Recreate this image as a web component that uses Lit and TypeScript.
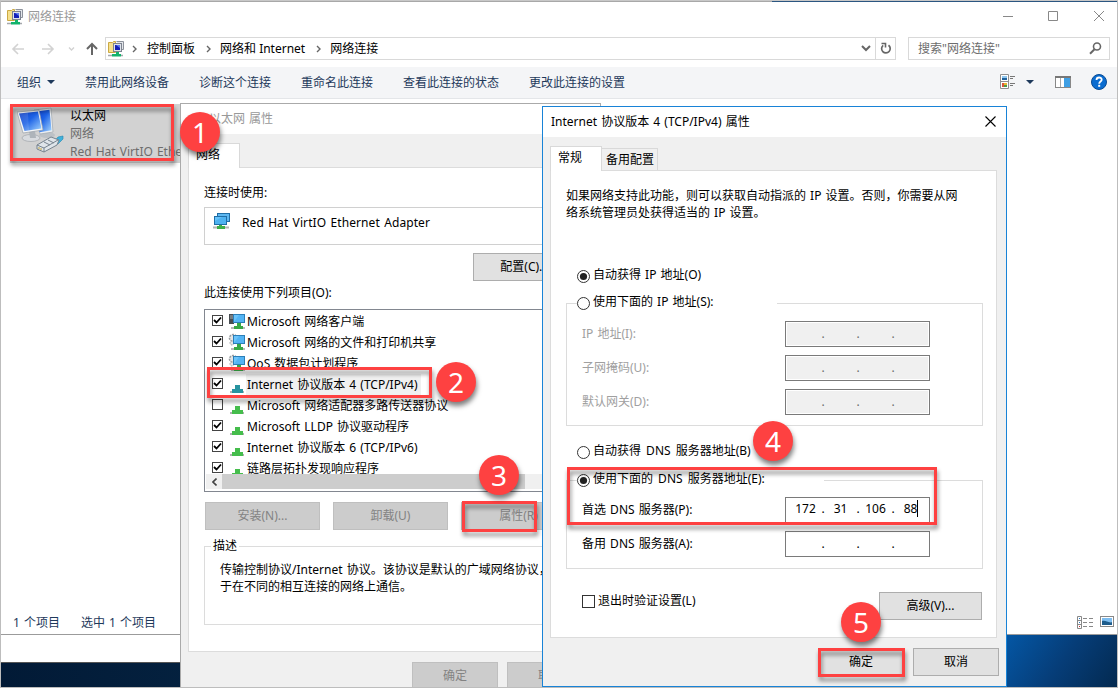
import { LitElement, html, css, svg } from 'lit';
import { customElement, property } from 'lit/decorators.js';

interface ProtocolItem {
  label: string;
  checked: boolean;
  icon: 'client' | 'service' | 'protocol';
  selected?: boolean;
}

const protocols: ProtocolItem[] = [
  { label: 'Microsoft 网络客户端', checked: true, icon: 'client' },
  { label: 'Microsoft 网络的文件和打印机共享', checked: true, icon: 'service' },
  { label: 'QoS 数据包计划程序', checked: true, icon: 'service' },
  { label: 'Internet 协议版本 4 (TCP/IPv4)', checked: true, icon: 'protocol', selected: true },
  { label: 'Microsoft 网络适配器多路传送器协议', checked: false, icon: 'protocol' },
  { label: 'Microsoft LLDP 协议驱动程序', checked: true, icon: 'protocol' },
  { label: 'Internet 协议版本 6 (TCP/IPv6)', checked: true, icon: 'protocol' },
  { label: '链路层拓扑发现响应程序', checked: true, icon: 'protocol' },
];

const ipLabels = ['IP 地址(I):', '子网掩码(U):', '默认网关(D):'];

const connectionsIcon = html`
  <svg width="16" height="16" viewBox="0 0 16 16">
    <path d="M0.500 1.500h4l1-1h2v11h-7z" fill="#f6e08c" stroke="#cba943"/>
    <path d="M8.500 0.500h7v8h-2" fill="#e3e6ea" stroke="#8d929c"/>
    <rect x="5.500" y="2.500" width="8" height="8" fill="#dfe3ea" stroke="#7d8390"/>
    <rect x="7" y="4" width="5" height="5" fill="#1420b8"/>
    <path d="M8 4h4v3z" fill="#5a78ee"/>
    <path d="M8 11h3v2h2v2.500H4V13h4z" fill="#12b36b"/>
    <path d="M0 14.500h4M13 14.500h2" stroke="#a5a8ad" stroke-width="1.600"/>
  </svg>
`;

const adapterIcon = html`
  <svg width="17" height="17" viewBox="0 0 17 17">
    <rect x="4.5" y="0.5" width="12" height="8" fill="#5db7f0" stroke="#1f6ea6"/>
    <rect x="1.5" y="3.5" width="12" height="8" fill="#67c3fa" stroke="#1f6ea6"/>
    <path d="M2 8l7-4h4v7H2z" fill="#3ea7ea" opacity=".6"/>
    <path d="M6 12h3v1h3v3H4v-3h2z" fill="#3fae49"/>
    <path d="M0 14.5h4M12 14.5h4" stroke="#b4b4b4" stroke-width="2"/>
  </svg>
`;

const ethernetIcon = html`
  <svg width="48" height="48" viewBox="0 0 48 48">
    <defs>
      <linearGradient id="screen" x1="0" y1="0" x2="1" y2="1">
        <stop offset="0" stop-color="#0d3cc4"/>
        <stop offset=".45" stop-color="#1e63e6"/>
        <stop offset="1" stop-color="#a5d7ff"/>
      </linearGradient>
    </defs>
    <ellipse cx="30" cy="28" rx="8" ry="3" fill="#bcc1c6"/>
    <path d="M17 3l17-2 2 24-13 2z" fill="#eceff2" stroke="#a0a7ae" stroke-width=".7"/>
    <path d="M19 4.500l13.500-1.800 2 20.500-12 2z" fill="url(#screen)"/>
    <ellipse cx="14" cy="31" rx="9" ry="3.500" fill="#d8dbdf" stroke="#a0a5ab" stroke-width=".7"/>
    <path d="M12 24h6l1 7h-6z" fill="#aeb4ba"/>
    <path d="M0 5l22-2 4 20-20 3z" fill="#f3f5f7" stroke="#9aa1a8" stroke-width=".7"/>
    <path d="M2 6.500l19-2 3.500 17-17 2.500z" fill="url(#screen)"/>
    <path d="M2 6.500l9-1 1 18-4.500 .5z" fill="#fff" opacity=".12"/>
    <path d="M37 35l4-5 5-1v3l-5 5z" fill="#3fb2dc" stroke="#2584ad" stroke-width=".6"/>
    <path d="M20 38l14-8 8 3-2 5-13 7-7-3z" fill="#dfe5ea" stroke="#77838e"/>
    <path d="M20 38l7 3 14-8M27 41v4M31 33l6 3M27 35l6 3" fill="none" stroke="#77838e"/>
    <path d="M22 40v2M24 41v2" stroke="#c3a33d"/>
  </svg>
`;

const protocolBase = (color: string) => svg`
  <path d="M3 17h2M16 17h1" stroke="#b0b0b0" stroke-width="2"/>
  <path d="M8 10h5v4h3v4H5v-4h3z" fill=${color}/>
`;

const monitor = svg`
  <path d="M4 16h3M15 16h3" stroke="#b9b9b9" stroke-width="2"/>
  <rect x="6.500" y="2.500" width="11" height="8" fill="#6cc4fa" stroke="#2c7fb8"/>
  <path d="M7 10l5-7h5v7z" fill="#43aaf0" opacity=".6"/>
  <path d="M10 11h4v3h2v3H7v-3h3z" fill="#38a846"/>
`;

const itemIcon = (item: ProtocolItem) => {
  if (item.icon === 'protocol') {
    return svg`${protocolBase(item.selected ? '#2794a0' : '#45bd4c')}`;
  }
  if (item.icon === 'client') {
    return svg`
      <rect x="2" y="2" width="5" height="10" fill="#474c50"/>
      <path d="M3 4h3M3 6h3" stroke="#a8adb0"/>
      ${monitor}
    `;
  }
  return svg`
    <circle cx="6" cy="5" r="3.500" fill="#e5e5e5" stroke="#969b9f" stroke-width="1.600" stroke-dasharray="2 1"/>
    <circle cx="5" cy="10" r="2" fill="#e5e5e5" stroke="#969b9f" stroke-dasharray="1.500 1"/>
    ${monitor}
  `;
};

@customElement('ip-field')
export class IpField extends LitElement {
  static styles = css`
    :host {
      display: block;
      box-sizing: border-box;
      width: 145px;
      height: 26px;
      border: 1px solid #7a7a7a;
      background: #fff;
      padding-left: 4px;
    }
    :host([disabled]) {
      background: #f0f0f0;
      box-shadow: inset 0 0 0 1px #fff;
      color: #6d6d6d;
    }
    .parts {
      display: grid;
      grid-template-columns: 31px 4px 31px 4px 31px 4px 31px;
      line-height: 22px;
      text-align: center;
    }
    .parts.empty {
      line-height: 23px;
    }
    .caret {
      display: inline-block;
      width: 1px;
      height: 17px;
      margin-right: -1px;
      background: #000;
      vertical-align: -4px;
    }
  `;

  @property({ type: Array }) parts: string[] = [];
  @property({ type: Boolean, reflect: true }) disabled = false;

  render() {
    const filled = this.parts.length > 0;
    return html`
      <div class="parts ${filled ? '' : 'empty'}">
        ${[0, 1, 2, 3].map(i => html`
          <span>${this.parts[i] ?? ''}${filled && i === 3 ? html`<i class="caret"></i>` : ''}</span>
          ${i < 3 ? html`<span>.</span>` : ''}
        `)}
      </div>
    `;
  }
}

@customElement('app-root')
export class AppRoot extends LitElement {
  static styles = css`
    :host {
      display: block;
      position: relative;
      width: 1118px;
      height: 688px;
      overflow: hidden;
      background: linear-gradient(90deg, #021a36, #04213f 17%, #033a70 80%, #0a5199);
      font: 12px/18px 'Noto Sans', 'Noto Sans CJK SC', sans-serif;
      word-spacing: 1px;
      color: #000;
      white-space: nowrap;
    }
    * {
      box-sizing: border-box;
    }
    svg {
      display: block;
      flex: none;
    }
    .frame {
      position: absolute;
      inset: 0;
      border: 1px solid #bdbdbd;
      border-top-color: #c8c8c8;
      pointer-events: none;
    }
    .wallpaper {
      position: absolute;
      left: 1007px;
      top: 634px;
      width: 111px;
      height: 54px;
      background: linear-gradient(125deg, #0457a5, #063d78 50%, #03294f);
    }
    .sheet {
      position: absolute;
      left: 0;
      top: 634px;
      width: 181px;
      height: 29px;
      background: #fff;
      border-bottom: 1px solid #555;
    }

    /* explorer window */
    .explorer {
      position: absolute;
      left: 0;
      top: 1px;
      width: 1117px;
      height: 634px;
      display: flex;
      flex-direction: column;
      background: #fff;
      border-top: 1px solid #a8a8a8;
      border-bottom: 1px solid #9b9b9b;
      border-left: 1px solid #bdbdbd;
    }
    .edge {
      position: absolute;
      left: 772px;
      top: 1px;
      width: 345px;
      height: 1px;
      background: #2b5681;
    }
    .titlebar {
      display: flex;
      align-items: center;
      height: 29px;
      padding: 0 1px 0 6px;
      color: #999;
    }
    .titlebar .name {
      flex: 1;
      padding-left: 5px;
    }
    .titlebar .controls {
      margin-top: -2px;
    }
    .nav {
      display: flex;
      align-items: center;
      height: 36px;
      padding: 6px 7px 7px 10px;
    }
    .nav .address {
      display: flex;
      align-items: center;
      width: 791px;
      height: 23px;
      margin-left: 6px;
      border: 1px solid #d9d9d9;
      padding-left: 2px;
      line-height: 20px;
      word-spacing: 0;
    }
    .crumb {
      margin: 0 9px 0 11px;
    }
    .crumb.first {
      margin: 0 10px 0 8px;
    }
    .address .tail {
      display: flex;
      align-items: center;
      align-self: stretch;
      margin-left: auto;
    }
    .refresh {
      display: flex;
      align-items: center;
      justify-content: center;
      width: 20px;
      height: 21px;
      margin-left: 4px;
      border-left: 1px solid #d9d9d9;
    }
    .search {
      display: flex;
      align-items: center;
      justify-content: space-between;
      width: 202px;
      height: 23px;
      margin-left: 12px;
      padding: 0 7px 0 9px;
      border: 1px solid #d9d9d9;
      color: #6d6d6d;
    }
    .toolbar {
      display: flex;
      align-items: center;
      gap: 30px;
      height: 32px;
      padding: 0 10px 0 16px;
      background: #f4f5f7;
      border-bottom: 1px solid #e4e6e9;
      color: #1e395b;
    }
    .toolbar .organize {
      display: flex;
      align-items: center;
      gap: 6px;
    }
    .organize svg {
      margin-top: -2px;
    }
    .toolbar .tools {
      display: flex;
      align-items: center;
      margin-left: auto;
      padding-bottom: 2px;
    }
    .tools .arrow {
      margin: 0 21px 0 10px;
    }
    .tools .help {
      margin-left: 20px;
    }
    .files {
      flex: 1;
      padding: 5px 0 0 9px;
    }
    .tile {
      display: flex;
      gap: 5px;
      width: 172px;
      height: 59px;
      padding: 3px 0 0 7px;
      background: #d2d2d2;
      color: #6d6d6d;
      overflow: hidden;
    }
    .tile strong {
      display: block;
      font-weight: normal;
      color: #000;
    }
    .status {
      display: flex;
      align-items: center;
      height: 24px;
      padding: 1px 3px 0 12px;
      color: #1e395b;
    }
    .status span {
      margin-right: 21px;
    }
    .status .views {
      display: flex;
      gap: 7px;
      margin-left: auto;
    }

    /* shared dialog parts */
    .dialog {
      position: absolute;
      isolation: isolate;
      display: flex;
      flex-direction: column;
      background: #f0f0f0;
    }
    .caption {
      display: flex;
      align-items: center;
      justify-content: space-between;
      flex: none;
      height: 30px;
      background: #fff;
    }
    .tabs {
      display: flex;
      align-items: flex-end;
      position: relative;
      z-index: 1;
    }
    .tab {
      border: 1px solid #d9d9d9;
      border-bottom: 0;
    }
    .tab.active {
      background: #fff;
      margin-bottom: -1px;
    }
    .page {
      background: #fff;
      border: 1px solid #dcdcdc;
    }
    .button {
      display: flex;
      align-items: center;
      justify-content: center;
      flex: none;
      height: 28px;
      background: #e1e1e1;
      border: 1px solid #adadad;
    }
    .button.off {
      background: #ccc;
      border-color: #bfbfbf;
      color: #838383;
    }

    /* adapter properties */
    .adapter {
      left: 180px;
      top: 103px;
      width: 421px;
      height: 600px;
      border: 1px solid #aaa;
    }
    .adapter .caption {
      justify-content: flex-start;
      gap: 5px;
      padding-left: 9px;
      color: #999;
    }
    .adapter .tabs {
      padding: 9px 0 0 7px;
    }
    .adapter .tab {
      width: 52px;
      height: 25px;
      padding-left: 7px;
      line-height: 22px;
    }
    .adapter .page {
      width: 404px;
      height: 485px;
      margin-left: 7px;
      padding: 16px 0 0 15px;
    }
    .device {
      display: flex;
      gap: 12px;
      height: 38px;
      margin: 5px 0 8px;
      padding: 5px 0 0 8px;
      border: 1px solid #d0d0d0;
      width: 374px;
      line-height: 20px;
      letter-spacing: 0.1px;
    }
    .configure {
      width: 103px;
      margin-left: 269px;
    }
    .list-label {
      margin: 3px 0 7px;
    }
    .list {
      width: 374px;
      height: 183px;
      border: 1px solid #828790;
      padding: 1px 1px 2px;
      display: flex;
      flex-direction: column;
    }
    .items {
      height: 163px;
      overflow: hidden;
    }
    .item {
      display: flex;
      align-items: center;
      height: 21px;
      padding-left: 6px;
      overflow: hidden;
    }
    .item svg {
      margin-left: 4px;
    }
    .item .text {
      padding: 1px 3px 0 1px;
      line-height: 20px;
    }
    .item.selected .text {
      background: #f0f0f0;
    }
    .tick {
      width: 11px;
      height: 11px;
      border: 1px solid #444;
      margin-top: -2px;
    }
    .tick svg {
      margin: 0;
    }
    .scroll {
      display: flex;
      align-items: center;
      height: 15px;
      background: #f0f0f0;
    }
    .scroll svg {
      margin: 0 5px 0 6px;
    }
    .thumb {
      width: 303px;
      height: 15px;
      background: #cdcdcd;
    }
    .actions {
      display: flex;
      gap: 13px;
      margin: 10px 0 6px 1px;
    }
    .actions .button {
      width: 115px;
    }
    fieldset {
      margin: 0;
      min-width: 0;
      border: 1px solid #dcdcdc;
    }
    .description {
      width: 374px;
      height: 89px;
      padding: 5px 15px;
      line-height: 17px;
    }
    .description legend {
      margin-left: -9px;
      padding: 0 2px;
      line-height: 20px;
    }
    .adapter .footer {
      display: flex;
      gap: 9px;
      padding: 10px 0 0 231px;
    }
    .footer .button {
      width: 86px;
    }

    /* TCP/IPv4 properties */
    .ipv4 {
      left: 542px;
      top: 106px;
      width: 465px;
      height: 581px;
      border: 1px solid #1883d7;
    }
    .ipv4 .caption {
      padding: 0 10px 0 8px;
    }
    .caption .close {
      margin-top: -2px;
    }
    .ipv4 .tabs {
      padding: 9px 0 0 7px;
    }
    .ipv4 .tab {
      height: 25px;
      width: 52px;
      padding-left: 7px;
      line-height: 22px;
    }
    .ipv4 .tab.idle {
      height: 22px;
      width: 56px;
      padding-left: 4px;
      border-left: 0;
      line-height: 22px;
    }
    .ipv4 .page {
      width: 447px;
      height: 468px;
      margin-left: 7px;
      padding: 16px 14px 0 15px;
    }
    .intro {
      line-height: 17px;
      margin-bottom: 45px;
    }
    .radio {
      display: flex;
      align-items: center;
      gap: 3px;
      height: 20px;
      margin-left: 11px;
    }
    .radio span {
      margin-top: -3px;
    }
    .group {
      display: flex;
      flex-direction: column;
      gap: 8px;
      width: 417px;
      margin-top: 7px;
      padding: 8px 0 10px 15px;
    }
    .group.dns {
      margin-top: 8px;
      padding: 7px 0 11px 15px;
    }
    .group legend {
      width: 200px;
      margin-left: -5px;
      padding: 0;
    }
    .group.dns legend {
      width: 247px;
      word-spacing: 2px;
    }
    .second {
      margin-top: 16px;
      word-spacing: 2px;
    }
    .field {
      display: grid;
      grid-template-columns: 203px 145px;
      line-height: 25px;
    }
    .field.off {
      color: #a0a0a0;
    }
    .validate {
      display: flex;
      justify-content: space-between;
      width: 416px;
      padding-left: 16px;
      margin-top: 23px;
    }
    .check {
      display: flex;
      align-items: center;
      gap: 3px;
      height: 18px;
    }
    .box {
      width: 13px;
      height: 13px;
      border: 1px solid #333;
    }
    .advanced {
      width: 103px;
    }
    .ipv4 .footer {
      display: flex;
      justify-content: flex-end;
      gap: 9px;
      padding: 10px 7px 0 0;
    }

    /* numbered callouts drawn over the windows */
    .mark {
      position: absolute;
      border: 3px solid #fe4141;
      filter: drop-shadow(1px 4px 2px rgba(0, 0, 0, 0.45));
    }
    .badge {
      position: absolute;
      width: 40px;
      height: 40px;
      border-radius: 50%;
      background: #fe4141;
      box-shadow: 1px 4px 5px rgba(0, 0, 0, 0.5);
      color: #fff;
      font-size: 28px;
      line-height: 40px;
      text-align: center;
    }
    .mark.m1 { left: 10px; top: 104px; width: 164px; height: 57px; }
    .mark.m2 { left: 207px; top: 367px; width: 225px; height: 31px; }
    .mark.m3 { left: 462px; top: 501px; width: 75px; height: 31px; }
    .mark.m4 { left: 567px; top: 467px; width: 370px; height: 58px; }
    .mark.m5 { left: 818px; top: 648px; width: 87px; height: 29px; }
    .badge.b1 { left: 180px; top: 112px; }
    .badge.b2 { left: 436px; top: 362px; }
    .badge.b3 { left: 479px; top: 455px; }
    .badge.b4 { left: 753px; top: 421px; }
    .badge.b5 { left: 841px; top: 602px; }
  `;

  private chevron() {
    return html`
      <svg width="5" height="8" viewBox="0 0 5 8">
        <path d="M1 1l3 3-3 3" fill="none" stroke="#666" stroke-width="1.4"/>
      </svg>
    `;
  }

  private radio(label: string, on: boolean) {
    return html`
      <svg width="13" height="13" viewBox="0 0 13 13">
        <circle cx="6.5" cy="6.5" r="6" fill="#fff" stroke="#333"/>
        ${on ? svg`<circle cx="6.5" cy="6.5" r="3.6" fill="#222"/>` : ''}
      </svg>
      <span>${label}</span>
    `;
  }

  private renderExplorer() {
    return html`
      <div class="explorer">
        <div class="titlebar">
          ${connectionsIcon}
          <span class="name">网络连接</span>
          <svg class="controls" width="116" height="14" viewBox="0 0 116 14" fill="none" stroke="#888">
            <path d="M3 7.500h10M48.500 2.500h9v9h-9zM94 2l10 10M104 2l-10 10"/>
          </svg>
        </div>
        <div class="nav">
          <svg width="88" height="14" viewBox="0 0 88 14" fill="none">
            <path d="M13 7H2M7 2L2 7l5 5M31 7h11M37 2l5 5-5 5" stroke="#d2d2d2" stroke-width="1.6"/>
            <path d="M58 5.500l2.500 2.500L63 5.500" stroke="#d2d2d2" stroke-width="1.400"/>
            <path d="M81 13V2M76 7l5-5 5 5" stroke="#666" stroke-width="2"/>
          </svg>
          <div class="address">
            ${connectionsIcon}
            <span class="crumb first">${this.chevron()}</span>
            <span>控制面板</span>
            <span class="crumb">${this.chevron()}</span>
            <span>网络和 Internet</span>
            <span class="crumb">${this.chevron()}</span>
            <span>网络连接</span>
            <div class="tail">
              <svg width="10" height="7" viewBox="0 0 10 7">
                <path d="M1 1l4 4 4-4" fill="none" stroke="#666" stroke-width="2"/>
              </svg>
              <div class="refresh">
                <svg width="12" height="13" viewBox="0 0 12 13">
                  <path d="M8.500 3.200A4.300 4.300 0 1 1 3.200 3.300" fill="none" stroke="#666" stroke-width="1.700"/>
                  <path d="M1.500 1.500h4v4" fill="none" stroke="#666" stroke-width="1.600"/>
                </svg>
              </div>
            </div>
          </div>
          <div class="search">
            <span>搜索"网络连接"</span>
            <svg width="13" height="13" viewBox="0 0 13 13">
              <circle cx="8" cy="4.500" r="3.500" fill="none" stroke="#666" stroke-width="1.600"/>
              <path d="M5.500 7.200L1 11.800" stroke="#666" stroke-width="2"/>
            </svg>
          </div>
        </div>
        <div class="toolbar">
          <span class="organize">
            组织
            <svg width="8" height="4" viewBox="0 0 8 4"><path d="M0 0h8L4 4z" fill="#1e395b"/></svg>
          </span>
          <span>禁用此网络设备</span>
          <span>诊断这个连接</span>
          <span>重命名此连接</span>
          <span>查看此连接的状态</span>
          <span>更改此连接的设置</span>
          <div class="tools">
            <svg width="16" height="15" viewBox="0 0 16 15">
              <path d="M0.500 0.500h8v14h-8zM0.500 7.500h8" fill="#fff" stroke="#8f8f8f"/>
              <path d="M2 2h5v2H2z" fill="#8fc6ef"/>
              <path d="M2 4h5v2H2z" fill="#20629b"/>
              <path d="M2 9h2v4H2z" fill="#d8563d"/>
              <path d="M4 9h3v2H4z" fill="#e9b731"/>
              <path d="M4 11h3v2H4z" fill="#4b9a4b"/>
              <path d="M10 2.500h5M10 4.500h3M10 9.500h5M10 11.500h3" stroke="#777"/>
            </svg>
            <svg class="arrow" width="8" height="4" viewBox="0 0 8 4"><path d="M0 0h8L4 4z" fill="#1e395b"/></svg>
            <svg width="16" height="12" viewBox="0 0 16 12">
              <rect x="0.500" y="0.500" width="15" height="11" fill="#fff" stroke="#888"/>
              <path d="M0 1h16" stroke="#777" stroke-width="2"/>
              <path d="M5.500 2v9" stroke="#aaa"/>
              <rect x="9" y="2" width="6" height="9" fill="#3f9fe4"/>
            </svg>
            <svg class="help" width="16" height="16" viewBox="0 0 16 16">
              <circle cx="8" cy="8" r="7.500" fill="#0a6cd0" stroke="#074a94"/>
              <path d="M5.500 6c0-3.400 5.200-3.200 5.200-.3 0 1.800-2.500 1.900-2.500 4" fill="none" stroke="#fff" stroke-width="1.800"/>
              <rect x="7.200" y="10.800" width="2" height="2" fill="#fff"/>
            </svg>
          </div>
        </div>
        <div class="files">
          <div class="tile">
            ${ethernetIcon}
            <div>
              <strong>以太网</strong>
              网络<br>Red Hat VirtIO Ethernet Adapter
            </div>
          </div>
        </div>
        <div class="status">
          <span>1 个项目</span>
          <span>选中 1 个项目</span>
          <div class="views">
            <svg width="16" height="13" viewBox="0 0 16 13" fill="none" stroke="#888">
              <path d="M0.500 0.500h4v12h-4zM0.500 4.500h4M0.500 8.500h4"/>
              <path d="M6 2.500h4M12 2.500h4M6 6.500h4M12 6.500h4M6 10.500h4M12 10.500h4"/>
              <path d="M2 2.500h1M2 6.500h1" stroke="#2a7ac0"/>
              <path d="M2 10.500h1" stroke="#c33"/>
            </svg>
            <svg width="14" height="11" viewBox="0 0 14 11">
              <rect x="0.500" y="0.500" width="13" height="10" fill="#fff" stroke="#888"/>
              <rect x="2" y="2" width="10" height="4" fill="#7dbdf0"/>
              <path d="M2 5c4-1 6 2 10 1v3H2z" fill="#1d5c8c"/>
            </svg>
          </div>
        </div>
      </div>
      <div class="edge"></div>
    `;
  }

  private renderItem(item: ProtocolItem) {
    return html`
      <div class="item ${item.selected ? 'selected' : ''}">
        <div class="tick">
          ${item.checked ? html`
            <svg width="9" height="9" viewBox="0 0 9 9">
              <path d="M1 4l2.500 2.500L8 1.500" fill="none" stroke="#000" stroke-width="1.800"/>
            </svg>
          ` : ''}
        </div>
        <svg width="19" height="19" viewBox="0 0 19 19">${itemIcon(item)}</svg>
        <span class="text">${item.label}</span>
      </div>
    `;
  }

  private renderAdapter() {
    return html`
      <div class="dialog adapter">
        <div class="caption">
          <svg width="14" height="14" viewBox="0 0 14 14">
            <circle cx="7" cy="7" r="5.500" fill="#e6eef5" stroke="#8fa3b5"/>
          </svg>
          以太网 属性
        </div>
        <div class="tabs"><div class="tab active">网络</div></div>
        <div class="page">
          <div>连接时使用:</div>
          <div class="device">${adapterIcon}<span>Red Hat VirtIO Ethernet Adapter</span></div>
          <div class="button configure">配置(C)...</div>
          <div class="list-label">此连接使用下列项目(O):</div>
          <div class="list">
            <div class="items">${protocols.map(item => this.renderItem(item))}</div>
            <div class="scroll">
              <svg width="5" height="8" viewBox="0 0 5 8">
                <path d="M4.500 0.500L1 4l3.500 3.500" fill="none" stroke="#444" stroke-width="1.600"/>
              </svg>
              <div class="thumb"></div>
            </div>
          </div>
          <div class="actions">
            <div class="button off">安装(N)...</div>
            <div class="button off">卸载(U)</div>
            <div class="button off">属性(R)</div>
          </div>
          <fieldset class="description">
            <legend>描述</legend>
            传输控制协议/Internet 协议。该协议是默认的广域网络协议，用<br>于在不同的相互连接的网络上通信。
          </fieldset>
        </div>
        <div class="footer">
          <div class="button off">确定</div>
          <div class="button off">取消</div>
        </div>
      </div>
    `;
  }

  private renderIpv4() {
    return html`
      <div class="dialog ipv4">
        <div class="caption">
          Internet 协议版本 4 (TCP/IPv4) 属性
          <svg class="close" width="11" height="11" viewBox="0 0 11 11">
            <path d="M0.500 0.500l10 10M10.500 0.500l-10 10" stroke="#000" stroke-width="1.100"/>
          </svg>
        </div>
        <div class="tabs">
          <div class="tab active">常规</div>
          <div class="tab idle">备用配置</div>
        </div>
        <div class="page">
          <div class="intro">
            如果网络支持此功能，则可以获取自动指派的 IP 设置。否则，你需要从网<br>
            络系统管理员处获得适当的 IP 设置。
          </div>
          <div class="radio">${this.radio('自动获得 IP 地址(O)', true)}</div>
          <fieldset class="group">
            <legend class="radio">${this.radio('使用下面的 IP 地址(S):', false)}</legend>
            ${ipLabels.map(label => html`
              <div class="field off">${label}<ip-field disabled></ip-field></div>
            `)}
          </fieldset>
          <div class="radio second">${this.radio('自动获得 DNS 服务器地址(B)', false)}</div>
          <fieldset class="group dns">
            <legend class="radio">${this.radio('使用下面的 DNS 服务器地址(E):', true)}</legend>
            <div class="field">首选 DNS 服务器(P):<ip-field .parts=${['172', '31', '106', '88']}></ip-field></div>
            <div class="field">备用 DNS 服务器(A):<ip-field></ip-field></div>
          </fieldset>
          <div class="validate">
            <div class="check"><div class="box"></div>退出时验证设置(L)</div>
            <div class="button advanced">高级(V)...</div>
          </div>
        </div>
        <div class="footer">
          <div class="button">确定</div>
          <div class="button">取消</div>
        </div>
      </div>
    `;
  }

  render() {
    return html`
      <div class="wallpaper"></div>
      <div class="sheet"></div>
      ${this.renderExplorer()}
      ${this.renderAdapter()}
      ${this.renderIpv4()}
      <div class="frame"></div>
      ${[1, 2, 3, 4, 5].map(n => html`
        <div class="mark m${n}"></div>
        <div class="badge b${n}">${n}</div>
      `)}
    `;
  }
}
